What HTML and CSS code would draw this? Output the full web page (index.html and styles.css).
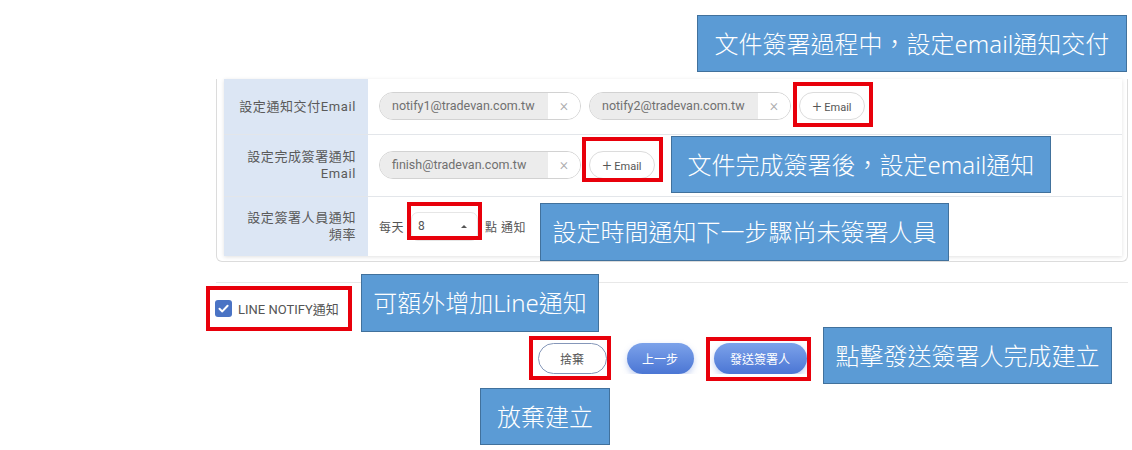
FILE: index.html
```html
<!DOCTYPE html>
<html lang="zh-Hant">
<head>
    <meta charset="UTF-8">
    <meta name="viewport" content="width=device-width, initial-scale=1.0">
    <title>設定通知</title>
    <link rel="stylesheet" href="styles.css">
</head>
<body>
    <div class="page">
        <div class="card">
            <table class="settings">
                <tr class="row-1">
                    <th>設定通知交付Email</th>
                    <td>
                        <span class="chip"><span class="chip-text">notify1@tradevan.com.tw</span><span class="chip-x">×</span></span>
                        <span class="chip"><span class="chip-text">notify2@tradevan.com.tw</span><span class="chip-x">×</span></span>
                        <button class="add-email"><span class="plus">+</span> Email</button>
                    </td>
                </tr>
                <tr class="row-2">
                    <th>設定完成簽署通知<br>Email</th>
                    <td>
                        <span class="chip"><span class="chip-text">finish@tradevan.com.tw</span><span class="chip-x">×</span></span>
                        <button class="add-email"><span class="plus">+</span> Email</button>
                    </td>
                </tr>
                <tr class="row-3">
                    <th>設定簽署人員通知<br>頻率</th>
                    <td>
                        <span class="freq">每天</span>
                        <span class="hour-select"><span>8</span><span class="caret"></span></span>
                        <span class="freq">點 通知</span>
                    </td>
                </tr>
            </table>
        </div>

        <hr class="divider">

        <label class="line-notify">
            <svg width="17" height="17" viewBox="0 0 17 17">
                <rect x="0" y="0" width="17" height="17" rx="3" fill="#4a73c4"/>
                <path d="M4.5 8.8 L7.3 11.4 L12.6 5.8" fill="none" stroke="#fff" stroke-width="2" stroke-linecap="round" stroke-linejoin="round"/>
            </svg>
            <span>LINE NOTIFY通知</span>
        </label>

        <div class="actions">
            <button class="btn btn-outline">捨棄</button>
            <button class="btn btn-blue btn-prev">上一步</button>
            <button class="btn btn-blue btn-send">發送簽署人</button>
        </div>
    </div>

    <!-- 說明標註 -->
    <div class="mark mark-add1"></div>
    <div class="mark mark-add2"></div>
    <div class="mark mark-hour"></div>
    <div class="mark mark-line"></div>
    <div class="mark mark-discard"></div>
    <div class="mark mark-send"></div>

    <div class="note note-notify">文件簽署過程中，設定email通知交付</div>
    <div class="note note-finish">文件完成簽署後，設定email通知</div>
    <div class="note note-hour">設定時間通知下一步驟尚未簽署人員</div>
    <div class="note note-line">可額外增加Line通知</div>
    <div class="note note-send">點擊發送簽署人完成建立</div>
    <div class="note note-discard">放棄建立</div>
</body>
</html>
```

FILE: styles.css
```css
body {
    margin: 0;
    font-family: Roboto, "Noto Sans CJK TC", sans-serif;
    color: #555;
    background: #fff;
}

.page {
    width: 912px;
    margin-left: 216px;
    padding-top: 79px;
}

.card {
    border: 1px solid #dcdcdc;
    border-top: none;
    border-radius: 0 0 6px 6px;
    padding: 0 5px 5px 7px;
}

.settings {
    width: 100%;
    border-collapse: collapse;
    box-shadow: 0 1px 4px rgba(0, 0, 0, 0.12);
}

.settings tr + tr {
    border-top: 1px solid #e3e6ea;
}

.settings th {
    width: 120px;
    padding: 0 12px;
    background-color: #dce6f4;
    text-align: right;
    font-weight: normal;
    font-size: 13px;
    line-height: 17px;
    letter-spacing: 0.6px;
    color: #5a5a5a;
}

.settings td {
    padding: 0 0 0 11px;
    font-size: 0;
}

.row-1 { height: 55px; }
.row-2 { height: 62px; }
.row-3 { height: 60px; }

.row-1 th { padding-top: 1px; }

.chip {
    display: inline-flex;
    vertical-align: middle;
    height: 26px;
    border: 1px solid #d2d2d2;
    border-radius: 14px;
    overflow: hidden;
    margin-right: 8px;
    font-size: 12.5px;
}

.chip-text {
    box-sizing: border-box;
    width: 168px;
    background-color: #ececec;
    padding: 0 0 0 12px;
    line-height: 26px;
    color: #707070;
}

.chip-x {
    width: 32px;
    text-align: center;
    line-height: 25px;
    font-size: 16px;
    font-weight: 300;
    color: #aaa;
    background: #fff;
}

.add-email {
    vertical-align: middle;
    height: 28px;
    width: 66px;
    padding: 0;
    border: 1px solid #dcdcdc;
    border-radius: 14px;
    background: #fff;
    font-family: Roboto, "Noto Sans CJK TC", sans-serif;
    font-size: 11px;
    color: #555;
}

.add-email .plus {
    font-size: 16px;
    font-weight: 300;
    vertical-align: -1px;
}

.freq {
    vertical-align: middle;
    font-size: 12px;
    letter-spacing: 0.5px;
    color: #555;
}

.hour-select {
    display: inline-flex;
    vertical-align: middle;
    align-items: center;
    justify-content: space-between;
    box-sizing: border-box;
    width: 67px;
    height: 29px;
    margin: 0 7px 0 7px;
    padding: 0 10px 0 6px;
    border: 1px solid #e6e6e6;
    border-radius: 7px;
    font-size: 12px;
    color: #555;
}

.caret {
    width: 0;
    height: 0;
    border-left: 3px solid transparent;
    border-right: 3px solid transparent;
    border-bottom: 3px solid #555;
}

.divider {
    margin: 20px 0 0 0;
    border: none;
    border-top: 1px solid #e8e8e8;
}

.line-notify {
    display: flex;
    align-items: center;
    gap: 6px;
    margin: 16px 0 0 -1px;
    font-size: 13px;
    color: #555;
}

.actions {
    display: flex;
    justify-content: center;
    gap: 20px;
    margin-top: 25px;
}

.btn {
    height: 31px;
    border-radius: 16px;
    font-family: Roboto, "Noto Sans CJK TC", sans-serif;
    font-size: 12px;
    padding: 0;
}

.btn-outline {
    width: 69px;
    background: #fff;
    border: 1px solid #8597b9;
    color: #555;
}

.btn-blue {
    border: none;
    color: #fff;
    background: linear-gradient(#7ca2ea, #4b76d4);
    box-shadow: 0 3px 6px rgba(80, 120, 215, 0.35);
}

.btn-prev { width: 67px; }
.btn-send { width: 93px; }

/* 標註 */
.mark {
    position: absolute;
    box-sizing: border-box;
    border: 4px solid #e8000b;
}

.mark-add1 { left: 793px; top: 82px; width: 80px; height: 45px; }
.mark-add2 { left: 582px; top: 137px; width: 81px; height: 45px; }
.mark-hour { left: 407px; top: 202px; width: 75px; height: 38px; }
.mark-line { left: 206px; top: 286px; width: 146px; height: 45px; }
.mark-discard { left: 529px; top: 336px; width: 82px; height: 44px; }
.mark-send { left: 706px; top: 337px; width: 105px; height: 44px; }

.note {
    position: absolute;
    box-sizing: border-box;
    display: flex;
    align-items: center;
    justify-content: center;
    background-color: #5b9bd5;
    border: 1px solid #41719c;
    color: #fff;
    font-family: "Noto Sans", "Noto Sans CJK TC", sans-serif;
    font-size: 24px;
    font-weight: 300;
    line-height: 30px;
}

.note-notify { left: 697px; top: 15px; width: 430px; height: 57px; }
.note-finish { left: 671px; top: 136px; width: 380px; height: 57px; }
.note-hour { left: 540px; top: 203px; width: 409px; height: 58px; }
.note-line { left: 361px; top: 274px; width: 238px; height: 58px; }
.note-send { left: 823px; top: 327px; width: 289px; height: 57px; }
.note-discard { left: 480px; top: 388px; width: 130px; height: 57px; }
```
